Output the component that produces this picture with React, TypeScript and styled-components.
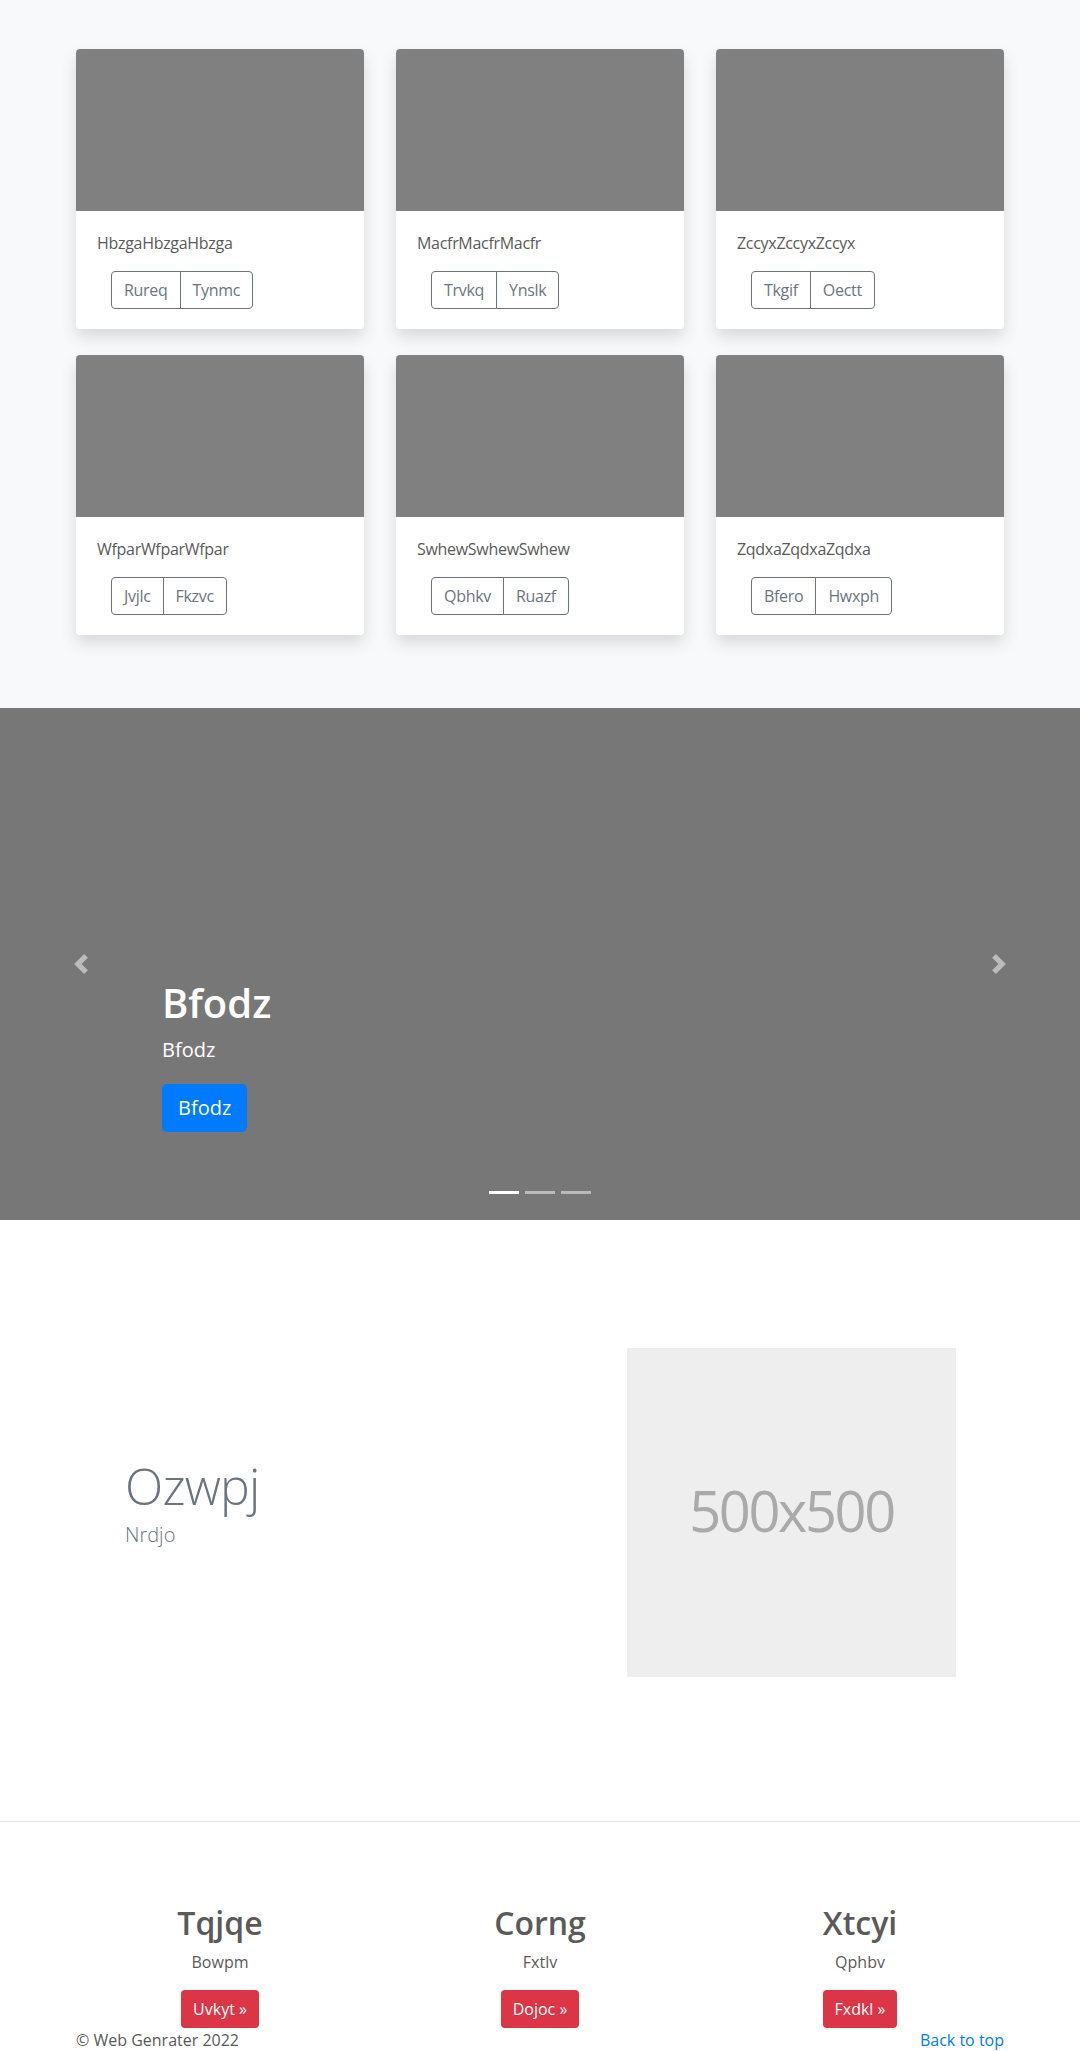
import React from "react";
import styled, { createGlobalStyle } from "styled-components";

const GlobalStyle = createGlobalStyle`
  * { box-sizing: border-box; }
  html, body { margin: 0; padding: 0; }
  body {
    font-family: "Open Sans", "Noto Sans", "Liberation Sans", sans-serif;
    font-size: 16px;
    line-height: 1.5;
    color: #5a5a5a;
    background: #fff;
  }
  p { margin: 0; }
  h1, h2 { margin: 0; }
`;

const Album = styled.section`
  background: #f8f9fa;
  padding: 49px 0 73px;
`;

const Container = styled.div`
  width: 960px;
  margin: 0 auto;
`;

const CardGrid = styled.div`
  display: grid;
  grid-template-columns: repeat(3, 288px);
  column-gap: 32px;
  row-gap: 26px;
  padding: 0 16px;
`;

const Card = styled.div`
  background: #fff;
  border-radius: 4px;
  overflow: hidden;
  box-shadow: 0 8px 16px rgba(0, 0, 0, 0.13);
`;

const CardImage = styled.div`
  height: 162px;
  background: #808080;
`;

const CardBody = styled.div`
  padding: 20px 21px 20px;
`;

const CardText = styled.p`
  margin-bottom: 16px;
  color: #5a5a5a;
  letter-spacing: -0.3px;
`;

const BtnGroup = styled.div`
  display: inline-flex;
  margin-left: 14px;
`;

const OutlineBtn = styled.button<{ $pos: "first" | "last" }>`
  font-family: inherit;
  font-size: 16px;
  line-height: 24px;
  letter-spacing: -0.3px;
  padding: 6px 12px;
  color: #6c757d;
  background: transparent;
  border: 1px solid #6c757d;
  border-radius: ${(p) => (p.$pos === "first" ? "4px 0 0 4px" : "0 4px 4px 0")};
  margin-left: ${(p) => (p.$pos === "last" ? "-1px" : "0")};
  cursor: pointer;
`;

const Carousel = styled.section`
  position: relative;
  height: 512px;
  background: #777;
  display: flex;
  align-items: flex-end;
`;

const Caption = styled.div`
  margin: 0 15% 88px;
  color: #fff;
`;

const CaptionTitle = styled.h1`
  font-size: 40px;
  font-weight: 600;
  line-height: 1.2;
  margin-bottom: 8px;
`;

const CaptionText = styled.p`
  font-size: 20px;
  line-height: 30px;
  margin-bottom: 19px;
`;

const PrimaryLg = styled.a`
  display: inline-block;
  font-size: 20px;
  line-height: 30px;
  padding: 9px 16px;
  border-radius: 5px;
  background: #007bff;
  color: #fff;
  text-decoration: none;
`;

const Control = styled.a<{ $side: "left" | "right" }>`
  position: absolute;
  top: 0;
  bottom: 0;
  ${(p) => p.$side}: 0;
  width: 15%;
  display: flex;
  align-items: center;
  justify-content: center;
  opacity: 0.5;
`;

const Indicators = styled.ol`
  position: absolute;
  left: 0;
  right: 0;
  bottom: 26px;
  margin: 0;
  padding: 0;
  list-style: none;
  display: flex;
  justify-content: center;
  gap: 6px;
`;

const Indicator = styled.li<{ $active?: boolean }>`
  width: 30px;
  height: 3px;
  background: #fff;
  opacity: ${(p) => (p.$active ? 1 : 0.5)};
`;

const Featurette = styled.section`
  padding: 128px 0 64px;
`;

const FeatRow = styled.div`
  width: 960px;
  margin: 0 auto;
  padding: 0 64px 0 65px;
  display: grid;
  grid-template-columns: 1fr 329px;
  align-items: center;
`;

const FeatText = styled.div`
  padding-bottom: 14px;
`;

const FeatHeading = styled.h2`
  font-size: 50px;
  font-weight: 300;
  line-height: 1;
  letter-spacing: -0.8px;
  color: #6c757d;
  margin-bottom: 9px;
`;

const Lead = styled.p`
  font-size: 20px;
  font-weight: 300;
  line-height: 30px;
  color: #6c757d;
`;

const Placeholder = styled.div`
  width: 329px;
  height: 329px;
  background: #eee;
  color: #aaa;
  font-size: 56px;
  letter-spacing: -2.4px;
  display: flex;
  align-items: center;
  justify-content: center;
  padding-bottom: 6px;
`;

const Divider = styled.hr`
  margin: 80px 0;
  border: 0;
  border-top: 1px solid #e5e5e5;
`;

const Marketing = styled.div`
  width: 960px;
  margin: 0 auto;
  display: grid;
  grid-template-columns: repeat(3, 1fr);
  padding-top: 2px;
`;

const MarketCol = styled.div`
  text-align: center;
  padding: 0 15px;
`;

const MarketTitle = styled.h2`
  font-size: 32px;
  font-weight: 600;
  line-height: 1.2;
  margin-bottom: 8px;
  color: #5a5a5a;
`;

const MarketText = styled.p`
  margin-bottom: 16px;
`;

const DangerBtn = styled.a`
  display: inline-block;
  padding: 7px 12px;
  font-size: 16px;
  line-height: 24px;
  border-radius: 4px;
  background: #dc3545;
  color: #fff;
  text-decoration: none;
`;

const Footer = styled.footer`
  width: 960px;
  margin: 0 auto 16px;
  padding: 0 16px;
  display: flex;
  justify-content: space-between;
`;

const TopLink = styled.a`
  color: #007bff;
  text-decoration: none;
`;

const cards = [
  ["HbzgaHbzgaHbzga", "Rureq", "Tynmc"],
  ["MacfrMacfrMacfr", "Trvkq", "Ynslk"],
  ["ZccyxZccyxZccyx", "Tkgif", "Oectt"],
  ["WfparWfparWfpar", "Jvjlc", "Fkzvc"],
  ["SwhewSwhewSwhew", "Qbhkv", "Ruazf"],
  ["ZqdxaZqdxaZqdxa", "Bfero", "Hwxph"],
];

const market = [
  ["Tqjqe", "Bowpm", "Uvkyt »"],
  ["Corng", "Fxtlv", "Dojoc »"],
  ["Xtcyi", "Qphbv", "Fxdkl »"],
];

const Chevron = ({ dir }: { dir: "prev" | "next" }) => (
  <svg width="20" height="20" viewBox="0 0 8 8" fill="#fff">
    {dir === "prev" ? (
      <path d="M5.25 0l-4 4 4 4 1.5-1.5L4.25 4l2.5-2.5L5.25 0z" />
    ) : (
      <path d="M2.75 0l-1.5 1.5L3.75 4l-2.5 2.5L2.75 8l4-4-4-4z" />
    )}
  </svg>
);

export default function App() {
  return (
    <>
      <GlobalStyle />
      <Album>
        <Container>
          <CardGrid>
            {cards.map(([t, a, b]) => (
              <Card key={t}>
                <CardImage />
                <CardBody>
                  <CardText>{t}</CardText>
                  <BtnGroup>
                    <OutlineBtn $pos="first">{a}</OutlineBtn>
                    <OutlineBtn $pos="last">{b}</OutlineBtn>
                  </BtnGroup>
                </CardBody>
              </Card>
            ))}
          </CardGrid>
        </Container>
      </Album>

      <Carousel>
        <Caption>
          <CaptionTitle>Bfodz</CaptionTitle>
          <CaptionText>Bfodz</CaptionText>
          <PrimaryLg href="#">Bfodz</PrimaryLg>
        </Caption>
        <Control $side="left" href="#">
          <Chevron dir="prev" />
        </Control>
        <Control $side="right" href="#">
          <Chevron dir="next" />
        </Control>
        <Indicators>
          <Indicator $active />
          <Indicator />
          <Indicator />
        </Indicators>
      </Carousel>

      <Featurette>
        <FeatRow>
          <FeatText>
            <FeatHeading>Ozwpj</FeatHeading>
            <Lead>Nrdjo</Lead>
          </FeatText>
          <Placeholder>500x500</Placeholder>
        </FeatRow>
      </Featurette>

      <Divider />

      <Marketing>
        {market.map(([h, p, b]) => (
          <MarketCol key={h}>
            <MarketTitle>{h}</MarketTitle>
            <MarketText>{p}</MarketText>
            <DangerBtn href="#">{b}</DangerBtn>
          </MarketCol>
        ))}
      </Marketing>

      <Footer>
        <p>© Web Genrater 2022</p>
        <p>
          <TopLink href="#">Back to top</TopLink>
        </p>
      </Footer>
    </>
  );
}
